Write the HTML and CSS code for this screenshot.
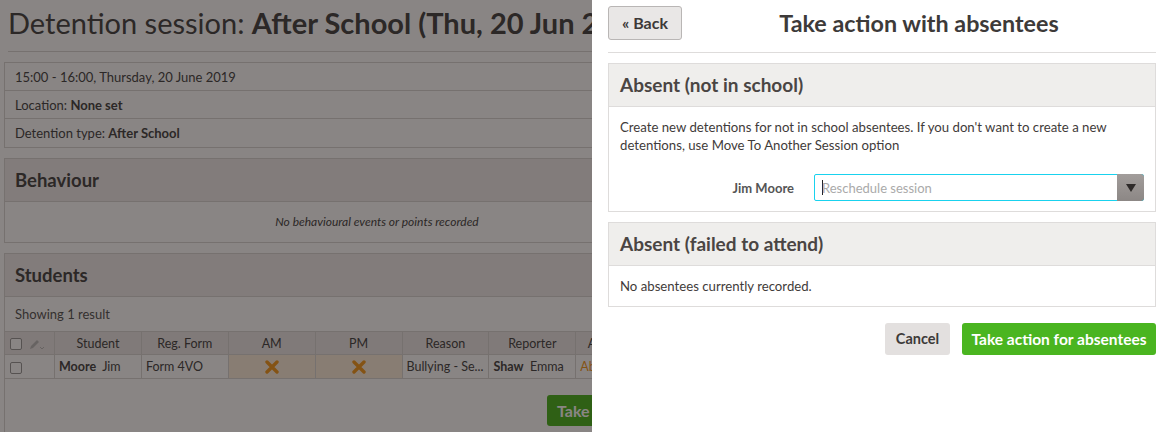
FILE: index.html
```html
<!DOCTYPE html>
<html>
<head>
<meta charset="utf-8">
<link rel="stylesheet" href="styles.css">
</head>
<body>
<div class="backdrop">
  <div class="page">
    <h1 class="title">Detention session: <b>After School (Thu, 20 Jun 2019)</b></h1>
    <div class="info">
      <div class="info-row">15:00 - 16:00, Thursday, 20 June 2019</div>
      <div class="info-row">Location: <b>None set</b></div>
      <div class="info-row">Detention type: <b>After School</b></div>
    </div>
    <div class="box">
      <div class="box-head">Behaviour</div>
      <div class="box-empty">No behavioural events or points recorded</div>
    </div>
    <div class="box students">
      <div class="box-head">Students</div>
      <div class="showing">Showing 1 result</div>
      <table class="tbl">
        <tr class="th">
          <td class="c0"><span class="chk"></span><svg class="pen" width="16" height="14" viewBox="0 0 16 14"><path d="M2 12 L3 9 L9 3 L11 5 L5 11 Z" fill="#bbb"/><path d="M12 10 L14 12 L16 10" fill="none" stroke="#bbb" stroke-width="1"/></svg></td>
          <td>Student</td><td>Reg. Form</td><td>AM</td><td>PM</td><td>Reason</td><td>Reporter</td><td>Attendance</td><td>Notes</td>
        </tr>
        <tr class="tr">
          <td class="c0"><span class="chk"></span></td>
          <td class="l"><b>Moore</b>&nbsp; Jim</td>
          <td class="l">Form 4VO</td>
          <td class="abs"><svg width="14" height="14" viewBox="0 0 14 14"><path d="M2 2 L12 12 M12 2 L2 12" stroke="#f59a1e" stroke-width="3.4" stroke-linecap="round"/></svg></td>
          <td class="abs"><svg width="14" height="14" viewBox="0 0 14 14"><path d="M2 2 L12 12 M12 2 L2 12" stroke="#f59a1e" stroke-width="3.4" stroke-linecap="round"/></svg></td>
          <td class="l">Bullying - Se...</td>
          <td class="l"><b>Shaw</b>&nbsp; Emma</td>
          <td class="l orange">Absent</td>
          <td></td>
        </tr>
      </table>
      <div class="actions-left"><span class="btn-green">Take action</span></div>
    </div>
  </div>
  <div class="shade"></div>
</div>
<div class="panel">
  <div class="panel-top">
    <span class="btn-back">« Back</span>
    <h2 class="panel-title">Take action with absentees</h2>
  </div>
  <div class="rule"></div>
  <div class="sec">
    <div class="sec-head">Absent (not in school)</div>
    <div class="sec-body sec-body-1">
      <p class="desc">Create new detentions for not in school absentees. If you don't want to create a new detentions, use Move To Another Session option</p>
      <div class="form-row">
        <label class="lbl">Jim Moore</label>
        <div class="select">
          <span class="caret"></span><span class="ph">Reschedule session</span>
          <span class="arrow"><svg width="10" height="8" viewBox="0 0 10 8"><path d="M0 0 H10 L5 8 Z" fill="#2e2a29"/></svg></span>
        </div>
      </div>
    </div>
  </div>
  <div class="sec">
    <div class="sec-head">Absent (failed to attend)</div>
    <div class="sec-body sec-body-2">
      <p class="desc">No absentees currently recorded.</p>
    </div>
  </div>
  <div class="panel-actions">
    <span class="btn-cancel">Cancel</span>
    <span class="btn-take">Take action for absentees</span>
  </div>
</div>
</body>
</html>
```

FILE: styles.css
```css
* { box-sizing: border-box; }
html, body { margin: 0; padding: 0; }
body {
  width: 1165px;
  height: 432px;
  overflow: hidden;
  display: flex;
  font-family: Lato, "Open Sans", sans-serif;
  color: #4a4645;
  background: #fff;
}
.backdrop {
  position: relative;
  width: 592px;
  flex: none;
  overflow: hidden;
}
.page {
  width: 754px;
  padding: 0 4px;
}
.shade {
  position: absolute;
  inset: 0;
  background: rgba(20, 11, 9, 0.5);
}
.title {
  margin: 0 4px;
  height: 52px;
  padding-top: 5px;
  font-size: 29px;
  font-weight: 400;
  line-height: 36px;
  white-space: nowrap;
  color: #444;
  border-bottom: 1px solid #d8d6d5;
}
.title b { font-weight: 700; }
.info {
  margin-top: 10px;
  border: 1px solid #d8d6d5;
}
.info-row {
  height: 28px;
  line-height: 29px;
  padding: 0 10px;
  font-size: 13px;
  color: #444;
  border-bottom: 1px solid #d8d6d5;
}
.info-row:last-child { border-bottom: 0; }
.box {
  margin-top: 10px;
  border: 1px solid #d8d6d5;
}
.box-head {
  height: 43px;
  line-height: 43px;
  padding: 0 10px;
  background: #f0edec;
  font-size: 18.5px;
  font-weight: 700;
  color: #444;
  border-bottom: 1px solid #d8d6d5;
}
.box-empty {
  height: 40px;
  line-height: 40px;
  text-align: center;
  font-size: 12px;
  font-style: italic;
  color: #444;
}
.showing {
  height: 34px;
  line-height: 34px;
  padding: 0 10px;
  font-size: 13px;
  color: #555;
}
.tbl {
  border-collapse: collapse;
  width: 746px;
  margin-left: -1px;
  font-size: 12.5px;
  table-layout: fixed;
}
.tbl td {
  border: 1px solid #d8d6d5;
  height: 23px;
  padding: 0 4px;
  text-align: center;
  white-space: nowrap;
  overflow: hidden;
  color: #444;
}
.tbl .c0 { width: 50px; text-align: left; padding-left: 5px; }
.th td { background: #ece9e8; height: 23px; }
.tr td { background: #fff; height: 24px; }
.tr td.l { text-align: left; }
.tr td.abs { background: #fdeedd; }
.tr td b { font-weight: 700; }
.orange { color: #f59a1e !important; }
.chk {
  display: inline-block;
  width: 12px;
  height: 12px;
  border: 1px solid #999;
  border-radius: 2px;
  background: #fff;
  vertical-align: middle;
}
.pen { vertical-align: middle; margin-left: 6px; }
.tbl svg { vertical-align: middle; }
.actions-left {
  display: flex;
  justify-content: flex-end;
  padding: 16px 10px 8px;
}
.btn-green {
  display: inline-block;
  height: 31px;
  line-height: 31px;
  padding: 0 12px 0 10px;
  background: #4ab520;
  color: #fff;
  font-weight: 700;
  font-size: 16px;
  border-radius: 3px;
  width: 192px;
}
.panel {
  width: 573px;
  flex: none;
  background: #fff;
  padding: 6px 9px 0 16px;
}
.panel-top {
  display: flex;
  align-items: center;
}
.btn-back {
  height: 34px;
  width: 74px;
  line-height: 32px;
  text-align: center;
  font-size: 16px;
  font-weight: 700;
  color: #3d3938;
  background: #e9e7e6;
  border: 1px solid #b9b6b5;
  border-radius: 3px;
}
.panel-title {
  flex: 1;
  margin: 0;
  text-align: center;
  font-size: 23.3px;
  font-weight: 700;
  color: #3d3a39;
}
.rule {
  margin-top: 12px;
  border-top: 1px solid #dedcdb;
}
.sec {
  margin-top: 10px;
  border: 1px solid #dedcdb;
}
.sec-head {
  height: 43px;
  line-height: 42px;
  padding: 0 11px;
  background: #efeeec;
  border-bottom: 1px solid #dedcdb;
  font-size: 19px;
  font-weight: 700;
  color: #4a4543;
}
.sec-body {
  padding: 11px 11px;
}
.sec-body-1 { padding-bottom: 10px; }
.sec-body-2 { padding-top: 11px; padding-bottom: 11px; }
.desc {
  margin: 0;
  font-size: 13.2px;
  line-height: 18px;
  color: #3f3b3a;
}
.form-row {
  display: flex;
  align-items: center;
  margin-top: 20px;
}
.lbl {
  width: 174px;
  text-align: right;
  font-size: 13px;
  font-weight: 700;
  color: #555;
  margin-right: 20px;
}
.select {
  flex: 1;
  position: relative;
  height: 27px;
  border: 1px solid #19d2ee;
  border-radius: 2px;
  display: flex;
  align-items: center;
  padding-left: 7px;
}
.caret {
  width: 1px;
  height: 15px;
  background: #222;
}
.ph {
  font-size: 13px;
  color: #aaa;
  margin-left: -1px;
}
.arrow {
  position: absolute;
  right: -1px;
  top: -1px;
  width: 27px;
  height: 27px;
  background: linear-gradient(#a29d9b, #8c8785);
  border-radius: 0 3px 3px 0;
  display: flex;
  align-items: center;
  justify-content: center;
}
.panel-actions {
  display: flex;
  justify-content: flex-end;
  gap: 12px;
  margin-top: 16px;
}
.btn-cancel, .btn-take {
  height: 32px;
  line-height: 32px;
  font-size: 14.5px;
  font-weight: 700;
  border-radius: 3px;
  text-align: center;
}
.btn-cancel {
  width: 65px;
  background: #e3e0df;
  color: #3d3a39;
}
.btn-take {
  width: 194px;
  background: #4ab520;
  color: #fff;
  font-size: 15.5px;
}
```
